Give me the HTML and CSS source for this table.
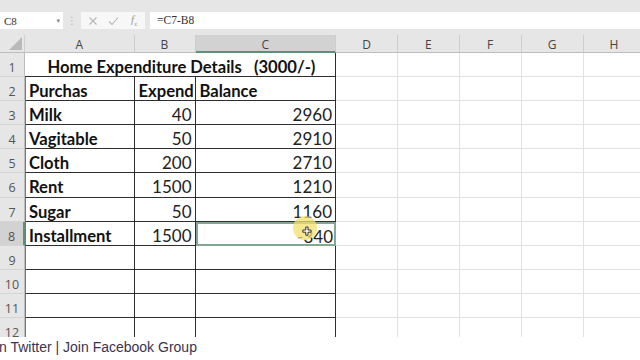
FILE: index.html
```html
<!DOCTYPE html>
<html>
<head>
<meta charset="utf-8">
<link rel="stylesheet" href="styles.css">
</head>
<body>
<div class="app">
  <div class="topstrip"></div>
  <div class="fbar">
    <div class="namebox"><span class="nb-text">C8</span><span class="nb-arrow">▾</span></div>
    <div class="dots">⋮</div>
    <div class="fbtns">
      <svg class="ic" width="10" height="10" viewBox="0 0 10 10"><path d="M1.5 1.5 L8.5 8.5 M8.5 1.5 L1.5 8.5" stroke="#b5b5b5" stroke-width="1.1" fill="none"/></svg>
      <svg class="ic" width="11" height="10" viewBox="0 0 11 10"><path d="M1 5.5 L4 8.5 L10 1.5" stroke="#b5b5b5" stroke-width="1.1" fill="none"/></svg>
      <span class="fx">f<sub>x</sub></span>
    </div>
    <div class="finput">=C7-B8</div>
  </div>
  <div class="sheet">
    <div class="corner"><div class="tri"></div></div>
    <div class="ch">A</div><div class="ch">B</div><div class="ch sel">C</div><div class="ch">D</div><div class="ch">E</div><div class="ch">F</div><div class="ch">G</div><div class="ch">H</div>

    <div class="rh">1</div>
    <div class="c title">Home Expenditure Details&nbsp;&nbsp;&nbsp;(3000/-)</div>
    <div class="g"></div><div class="g"></div><div class="g"></div><div class="g"></div><div class="g"></div>

    <div class="rh">2</div>
    <div class="c a b">Purchas</div><div class="c b">Expend</div><div class="c b">Balance</div>
    <div class="g"></div><div class="g"></div><div class="g"></div><div class="g"></div><div class="g"></div>

    <div class="rh">3</div>
    <div class="c a b">Milk</div><div class="c n">40</div><div class="c n">2960</div>
    <div class="g"></div><div class="g"></div><div class="g"></div><div class="g"></div><div class="g"></div>

    <div class="rh">4</div>
    <div class="c a b">Vagitable</div><div class="c n">50</div><div class="c n">2910</div>
    <div class="g"></div><div class="g"></div><div class="g"></div><div class="g"></div><div class="g"></div>

    <div class="rh">5</div>
    <div class="c a b">Cloth</div><div class="c n">200</div><div class="c n">2710</div>
    <div class="g"></div><div class="g"></div><div class="g"></div><div class="g"></div><div class="g"></div>

    <div class="rh">6</div>
    <div class="c a b">Rent</div><div class="c n">1500</div><div class="c n">1210</div>
    <div class="g"></div><div class="g"></div><div class="g"></div><div class="g"></div><div class="g"></div>

    <div class="rh">7</div>
    <div class="c a b">Sugar</div><div class="c n">50</div><div class="c n">1160</div>
    <div class="g"></div><div class="g"></div><div class="g"></div><div class="g"></div><div class="g"></div>

    <div class="rh sel">8</div>
    <div class="c a b">Installment</div><div class="c n">1500</div><div class="c n active">-340</div>
    <div class="g"></div><div class="g"></div><div class="g"></div><div class="g"></div><div class="g"></div>

    <div class="rh">9</div>
    <div class="c a"></div><div class="c"></div><div class="c"></div>
    <div class="g"></div><div class="g"></div><div class="g"></div><div class="g"></div><div class="g"></div>

    <div class="rh">10</div>
    <div class="c a"></div><div class="c"></div><div class="c"></div>
    <div class="g"></div><div class="g"></div><div class="g"></div><div class="g"></div><div class="g"></div>

    <div class="rh">11</div>
    <div class="c a"></div><div class="c"></div><div class="c"></div>
    <div class="g"></div><div class="g"></div><div class="g"></div><div class="g"></div><div class="g"></div>

    <div class="rh">12</div>
    <div class="c a"></div><div class="c"></div><div class="c"></div>
    <div class="g"></div><div class="g"></div><div class="g"></div><div class="g"></div><div class="g"></div>

    <svg class="cursor" width="30" height="30" viewBox="0 0 30 30">
      <circle cx="15" cy="15" r="12" fill="#f3df6c" fill-opacity="0.75"/>
      <path d="M15.8 14 h2.2 v3 h3 v2.2 h-3 v3 h-2.2 v-3 h-3 v-2.2 h3 z" fill="#fff" stroke="#222" stroke-width="0.9"/>
    </svg>
  </div>
  <div class="footer">n Twitter | Join Facebook Group</div>
</div>
</body>
</html>
```

FILE: styles.css
```css
html, body {
  margin: 0;
  padding: 0;
  background: #ffffff;
}
.app {
  width: 640px;
  height: 360px;
  overflow: hidden;
  position: relative;
  background: #ffffff;
}
.topstrip {
  height: 12px;
  background: #e6e6e6;
}
.fbar {
  display: flex;
  align-items: stretch;
  height: 17px;
  background: #e6e6e6;
  padding-bottom: 6px;
}
.namebox {
  width: 63px;
  background: #ffffff;
  display: flex;
  align-items: center;
  justify-content: space-between;
  box-sizing: border-box;
  padding: 0 3px 0 4px;
}
.nb-text {
  font-family: "Liberation Serif", serif;
  font-size: 11px;
  color: #333;
}
.nb-arrow {
  font-family: "DejaVu Sans", sans-serif;
  font-size: 7px;
  color: #888;
}
.dots {
  width: 18px;
  text-align: center;
  font-family: "DejaVu Sans", sans-serif;
  font-size: 10px;
  line-height: 17px;
  color: #b8b8b8;
}
.fbtns {
  width: 64px;
  background: #f7f7f7;
  display: flex;
  align-items: center;
  gap: 10px;
  padding-left: 7px;
  box-sizing: border-box;
}
.fx {
  font-family: "Liberation Serif", serif;
  font-style: italic;
  font-size: 11px;
  color: #9a9a9a;
  margin-left: 2px;
}
.fx sub {
  font-size: 7px;
}
.finput {
  flex: 1;
  margin-left: 5px;
  background: #ffffff;
  font-family: "Liberation Serif", serif;
  font-size: 11.5px;
  line-height: 17px;
  color: #333;
  padding-left: 7px;
}
.sheet {
  position: relative;
  display: grid;
  grid-template-columns: 25px 109.5px 61px 140.5px 62px 61.5px 62px 62px 62px;
  grid-template-rows: 18px repeat(12, 24.1px);
  height: 302px;
  overflow: hidden;
  background: #ffffff;
}
.corner {
  background: #e6e6e6;
  border-right: 1px solid #cfcfcf;
  border-bottom: 1px solid #bdbdbd;
  box-sizing: border-box;
  position: relative;
}
.tri {
  position: absolute;
  right: 2px;
  bottom: 2px;
  width: 0;
  height: 0;
  border-left: 13px solid transparent;
  border-bottom: 13px solid #b9b9b9;
}
.ch {
  background: #e6e6e6;
  border-right: 1px solid #cdcdcd;
  border-bottom: 1px solid #bdbdbd;
  box-sizing: border-box;
  text-align: center;
  font-family: "Open Sans", sans-serif;
  font-size: 12px;
  line-height: 20px;
  color: #444;
}
.ch.sel {
  background: #d2d2d2;
  border-bottom: 2px solid #5f8f74;
}
.rh {
  background: #e6e6e6;
  border-right: 1px solid #bdbdbd;
  border-bottom: 1px solid #d4d4d4;
  box-sizing: border-box;
  text-align: center;
  font-family: "Open Sans", sans-serif;
  font-size: 12.5px;
  line-height: 29px;
  color: #555;
}
.rh.sel {
  background: #d2d2d2;
  border-right: 2px solid #5f8f74;
}
.c {
  border-right: 1px solid #2e2e2e;
  border-bottom: 1px solid #2e2e2e;
  box-sizing: border-box;
  font-family: "Lato", sans-serif;
  font-size: 17px;
  line-height: 20px;
  color: #111;
  padding: 4px 3px 0 4px;
  white-space: nowrap;
  overflow: hidden;
}
.c.a {
  border-left: 1px solid #7a7a7a;
  padding-left: 3px;
}
.c.b {
  font-weight: 700;
  font-size: 16.6px;
}
.c.n {
  text-align: right;
  color: #222;
}
.c.title {
  grid-column: span 3;
  text-align: center;
  font-weight: 700;
  font-size: 16.6px;
  padding-left: 6px;
}
.c.active {
  border: 2px solid #82a893;
  padding-top: 3px;
  padding-right: 1px;
}
.g {
  border-right: 1px solid #e2e2e2;
  border-bottom: 1px solid #e2e2e2;
  box-sizing: border-box;
}
.cursor {
  position: absolute;
  left: 290px;
  top: 178px;
}
.footer {
  font-family: "Liberation Sans", sans-serif;
  font-size: 14px;
  line-height: 21px;
  color: #3b3350;
  margin-left: -1px;
  white-space: nowrap;
}
```
